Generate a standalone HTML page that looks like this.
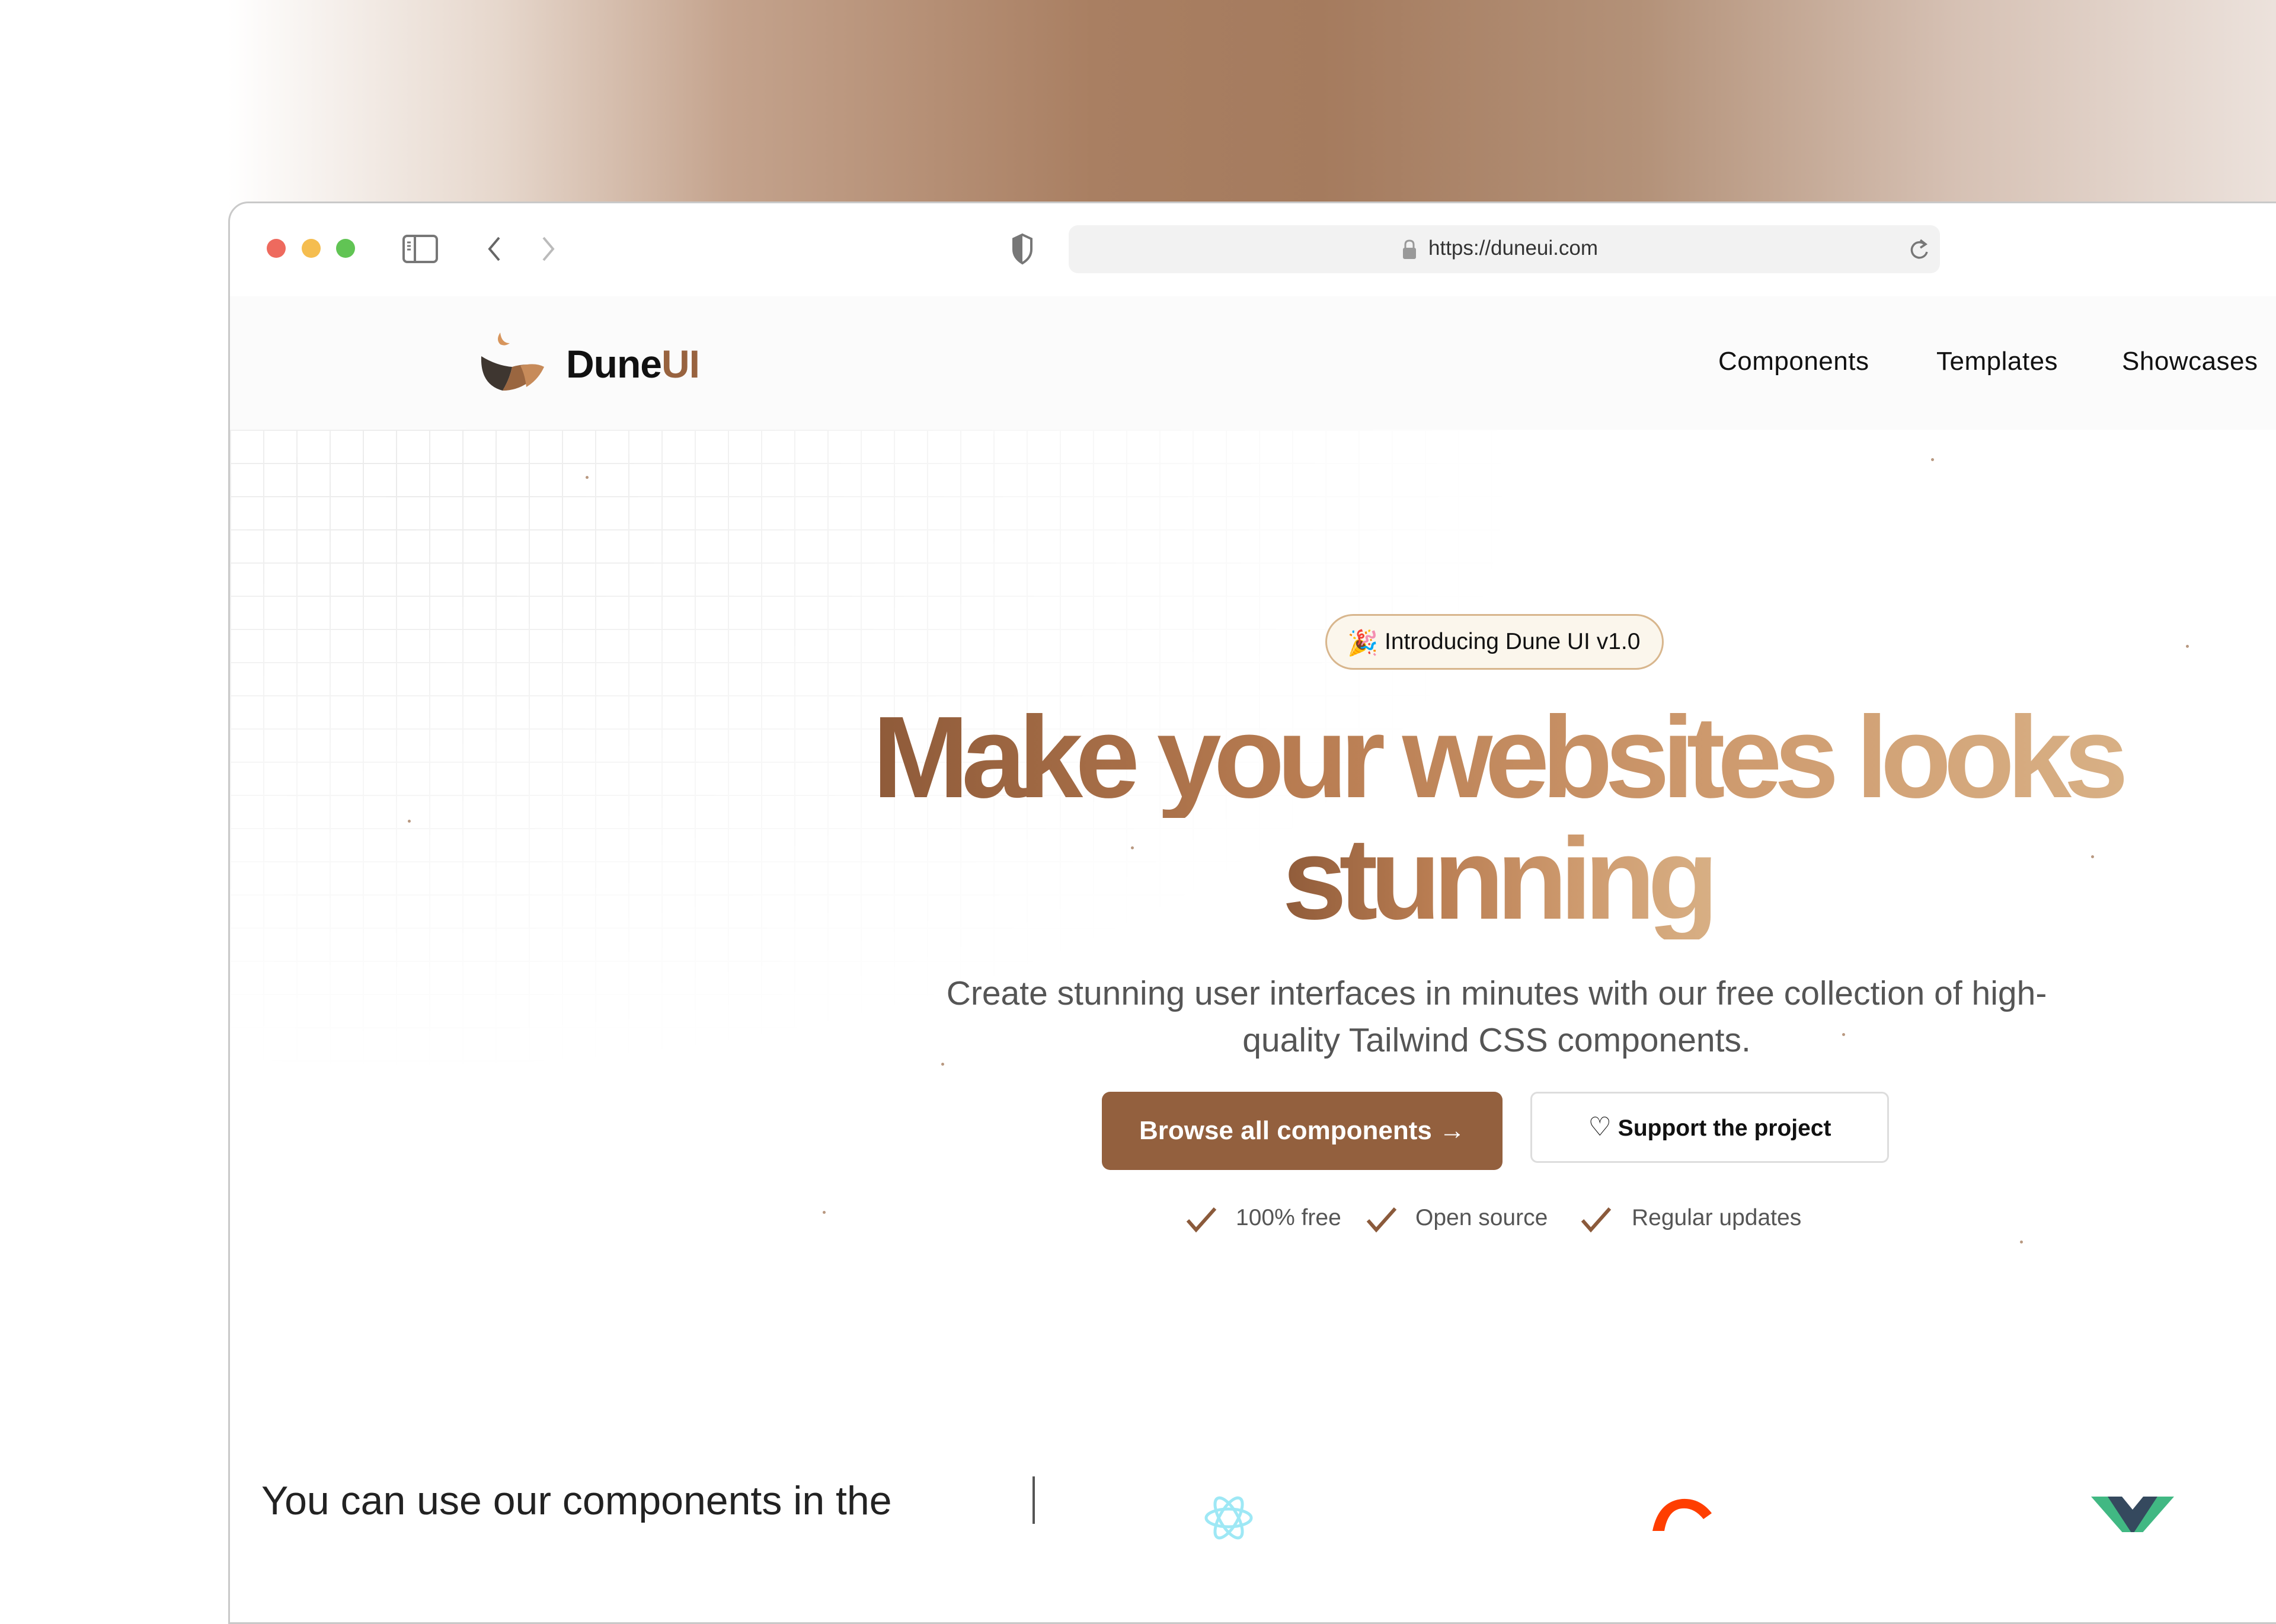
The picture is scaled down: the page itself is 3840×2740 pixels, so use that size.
<!DOCTYPE html>
<html><head><meta charset="utf-8"><style>
*{margin:0;padding:0;box-sizing:border-box}
html,body{width:3840px;height:2560px;overflow:hidden;background:#fff;font-family:"Liberation Sans",sans-serif}
.topbg{position:absolute;left:0;top:0;width:3840px;height:360px;background:linear-gradient(90deg,#fff 0%,#fff 10%,#e6d7cc 22%,#c4a38d 32%,#a97f62 48%,#a57b5e 58%,#b39178 72%,#d6c1b4 86%,#ece2dc 100%)}
.win{position:absolute;left:385px;top:340px;width:3600px;height:2400px;background:#fff;border:3px solid #c9c9c9;border-radius:34px 0 0 0;overflow:hidden}
.abs{position:absolute}
.dot{position:absolute;width:32px;height:32px;border-radius:50%;top:60px}
.hdr{position:absolute;left:0;top:157px;width:3600px;height:225px;background:#fbfbfb}
.grid{position:absolute;left:0;top:382px;width:3000px;height:1300px;
background-image:linear-gradient(#ebebeb 2px,transparent 2px),linear-gradient(90deg,#ebebeb 2px,transparent 2px);background-size:56px 56px;
-webkit-mask-image:radial-gradient(ellipse 1900px 1000px at 300px 100px,#000 0%,rgba(0,0,0,.45) 50%,transparent 100%);mask-image:radial-gradient(ellipse 1900px 1000px at 300px 100px,#000 0%,rgba(0,0,0,.45) 50%,transparent 100%)}
.c{position:absolute;left:0;width:4274px;text-align:center}
.h1{font-weight:700;font-size:196px;letter-spacing:-13px;line-height:205px;background:linear-gradient(90deg,#8e5a39 0%,#b97d52 35%,#cf9c70 70%,#d8b085 100%);-webkit-background-clip:text;background-clip:text;color:transparent;display:inline-block;padding:0 10px}
.sp{position:absolute;width:5px;height:5px;border-radius:50%;background:#b89880}
</style></head><body>
<div class="topbg"></div>
<div class="win">
  <div class="dot" style="left:62px;background:#ee6a5e"></div>
  <div class="dot" style="left:121px;background:#f5bd4f"></div>
  <div class="dot" style="left:179px;background:#61c454"></div>
  <svg class="abs" style="left:290px;top:52px" width="62" height="50" viewBox="0 0 62 50"><rect x="3" y="3" width="56" height="44" rx="6" fill="none" stroke="#777" stroke-width="4"/><line x1="22" y1="3" x2="22" y2="47" stroke="#777" stroke-width="4"/><line x1="9" y1="14" x2="15" y2="14" stroke="#777" stroke-width="3"/><line x1="9" y1="20" x2="15" y2="20" stroke="#777" stroke-width="3"/><line x1="9" y1="26" x2="15" y2="26" stroke="#777" stroke-width="3"/></svg>
  <svg class="abs" style="left:430px;top:54px" width="30" height="46" viewBox="0 0 30 46"><path d="M24 4 L8 23 L24 42" fill="none" stroke="#666" stroke-width="4"/></svg>
  <svg class="abs" style="left:523px;top:54px" width="30" height="46" viewBox="0 0 30 46"><path d="M6 4 L22 23 L6 42" fill="none" stroke="#bbb" stroke-width="4"/></svg>
  <svg class="abs" style="left:1319px;top:50px" width="36" height="54" viewBox="0 0 36 54"><path d="M18 3 L33 10 L33 28 Q33 42 18 51 Q3 42 3 28 L3 10 Z" fill="#fff" stroke="#777" stroke-width="4"/><path d="M18 3 L3 10 L3 28 Q3 42 18 51 Z" fill="#777"/></svg>
  <div class="abs" style="left:1415px;top:37px;width:1470px;height:81px;background:#f2f2f2;border-radius:16px"></div>
  <svg class="abs" style="left:1977px;top:60px" width="26" height="36" viewBox="0 0 26 36"><path d="M6 16 V10 Q6 3 13 3 Q20 3 20 10 V16" fill="none" stroke="#999" stroke-width="3"/><rect x="2" y="15" width="22" height="19" rx="3" fill="#999"/></svg>
  <div class="abs" style="left:2022px;top:56px;font-size:35px;color:#333">https://duneui.com</div>
  <svg class="abs" style="left:2830px;top:56px" width="40" height="44" viewBox="0 0 40 44"><path d="M30 14 A13 13 0 1 0 33 26" fill="none" stroke="#777" stroke-width="3.5"/><path d="M22 6 L31 13 L22 19" fill="none" stroke="#777" stroke-width="3.5"/></svg>

  <div class="hdr"></div>
  <div class="grid"></div>
  <div class="sp" style="left:600px;top:460px"></div><div class="sp" style="left:300px;top:1040px"></div>
  <div class="sp" style="left:1520px;top:1085px"></div><div class="sp" style="left:3300px;top:745px"></div>
  <div class="sp" style="left:2870px;top:430px"></div><div class="sp" style="left:2720px;top:1400px"></div>
  <div class="sp" style="left:1200px;top:1450px"></div><div class="sp" style="left:3140px;top:1100px"></div>
  <div class="sp" style="left:1000px;top:1700px"></div><div class="sp" style="left:3020px;top:1750px"></div>
  <svg class="abs" style="left:420px;top:216px" width="115" height="105" viewBox="0 0 115 105"><path d="M36 2 Q28 14 36 22 Q44 26 52 20 Q38 20 36 2Z" fill="#d7955c"/><path d="M4 42 Q2 90 40 100 Q52 80 56 60 Q30 58 4 42Z" fill="#3e3630"/><path d="M40 100 Q80 100 110 60 Q82 52 56 60 Q52 80 40 100Z" fill="#9a6640"/><path d="M70 58 Q95 52 110 60 Q100 82 80 94 Q78 74 70 58Z" fill="#c78b5a"/></svg>
  <div class="abs" style="left:567px;top:233px;font-size:66px;font-weight:700;color:#111;letter-spacing:-1px">Dune<span style="color:#98633f">UI</span></div>
  <div class="abs" style="left:2511px;top:242px;font-size:44px;color:#111;letter-spacing:.5px">Components</div>
  <div class="abs" style="left:2879px;top:242px;font-size:44px;color:#111;letter-spacing:.5px">Templates</div>
  <div class="abs" style="left:3192px;top:242px;font-size:44px;color:#111;letter-spacing:.5px">Showcases</div>

  <div class="abs" style="left:1848px;top:693px;width:571px;height:94px;border:3px solid #d8b68d;background:#fbf6ec;border-radius:47px"></div>
  <div class="abs" style="left:1885px;top:718px;font-size:42px">🎉</div>
  <div class="abs" style="left:1948px;top:718px;font-size:39px;color:#111">Introducing Dune UI v1.0</div>

  <div class="c" style="top:832px"><span class="h1">Make your websites looks</span></div>
  <div class="c" style="top:1037px"><span class="h1">stunning</span></div>

  <div class="c" style="top:1294px;font-size:57px;line-height:79px;color:#555;font-weight:300">Create stunning user interfaces in minutes with our free collection of high-<br>quality Tailwind CSS components.</div>

  <div class="abs" style="left:1471px;top:1499px;width:676px;height:132px;background:#93603e;border-radius:14px;color:#fff;font-size:44px;font-weight:700;line-height:132px;text-align:center">Browse all components →</div>
  <div class="abs" style="left:2194px;top:1499px;width:605px;height:120px;background:#fff;border:3px solid #ddd;border-radius:12px;color:#111;font-size:39px;font-weight:700;line-height:114px;text-align:center"><span style="font-weight:400;font-size:44px">♡</span> Support the project</div>

  <svg class="abs" style="left:1612px;top:1690px" width="56" height="50" viewBox="0 0 56 50"><path d="M4 26 L18 42 L50 6" fill="none" stroke="#8b5a3b" stroke-width="6"/></svg>
  <div class="abs" style="left:1697px;top:1690px;font-size:39px;color:#555">100% free</div>
  <svg class="abs" style="left:1916px;top:1690px" width="56" height="50" viewBox="0 0 56 50"><path d="M4 26 L18 42 L50 6" fill="none" stroke="#8b5a3b" stroke-width="6"/></svg>
  <div class="abs" style="left:2000px;top:1690px;font-size:39px;color:#555">Open source</div>
  <svg class="abs" style="left:2278px;top:1690px" width="56" height="50" viewBox="0 0 56 50"><path d="M4 26 L18 42 L50 6" fill="none" stroke="#8b5a3b" stroke-width="6"/></svg>
  <div class="abs" style="left:2365px;top:1690px;font-size:39px;color:#555">Regular updates</div>

  <div class="abs" style="left:53px;top:2150px;font-size:68px;color:#222">You can use our components in the</div>
  <div class="abs" style="left:1354px;top:2148px;width:4px;height:80px;background:#555"></div>
  <svg class="abs" style="left:1640px;top:2178px" width="90" height="80" viewBox="0 0 90 80"><ellipse cx="45" cy="40" rx="38" ry="15" fill="none" stroke="#9ee8f5" stroke-width="5"/><ellipse cx="45" cy="40" rx="38" ry="15" transform="rotate(60 45 40)" fill="none" stroke="#9ee8f5" stroke-width="5"/><ellipse cx="45" cy="40" rx="38" ry="15" transform="rotate(-60 45 40)" fill="none" stroke="#9ee8f5" stroke-width="5"/></svg>
  <svg class="abs" style="left:2390px;top:2180px" width="120" height="60" viewBox="0 0 120 60"><path d="M10 60 Q20 10 60 6 Q90 4 110 30 L96 40 Q80 20 60 22 Q36 24 30 60Z" fill="#ff3e00"/></svg>
  <svg class="abs" style="left:3140px;top:2182px" width="140" height="60" viewBox="0 0 140 60"><path d="M0 0 H28 L70 40 L112 0 H140 L70 80Z" fill="#41b883"/><path d="M28 0 H52 L70 22 L88 0 H112 L70 64Z" fill="#35495e"/></svg>
</div>
</body></html>
